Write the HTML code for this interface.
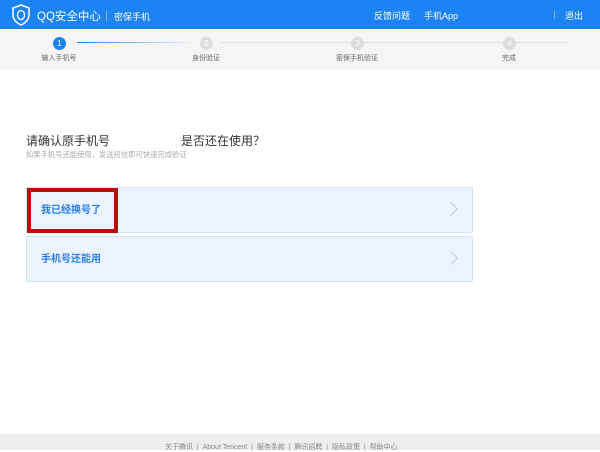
<!DOCTYPE html>
<html><head><meta charset="utf-8"><style>
*{margin:0;padding:0;box-sizing:border-box}
body{width:600px;height:450px;position:relative;background:#fff;font-family:"Liberation Sans","Noto Sans CJK SC",sans-serif;overflow:hidden}
.hd{position:absolute;left:0;top:0;width:600px;height:29px;background:#1b84f2;color:#fff}
.t{position:absolute;font-size:9px;white-space:nowrap}
.st{position:absolute;top:29px;left:0;width:600px;height:40px;background:#f5f5f5}
.c{position:absolute;width:13px;height:13px;border-radius:50%;background:#ddd;color:#fff;font-size:8px;text-align:center;line-height:13px;top:37px}
.lbl{position:absolute;top:53px;font-size:7px;color:#666;white-space:nowrap;transform:translateX(-50%)}
.box{position:absolute;left:26px;width:447px;background:#eaf3fe;border:1px solid #cfe2fa;border-radius:2px}
.box span{position:absolute;left:14px;font-size:10px;font-weight:bold;color:#2b7de9;line-height:12px}
.arr{position:absolute;right:16px;top:16px;width:10px;height:10px;border-top:1px solid #c5cdd8;border-right:1px solid #c5cdd8;transform:rotate(45deg)}
</style></head><body>
<div class="hd">
<svg style="position:absolute;left:12px;top:4px" width="18" height="22" viewBox="0 0 18 22"><path d="M9 1 L17 4 V11 C17 16 13 19 9 21 C5 19 1 16 1 11 V4 Z" fill="none" stroke="#fff" stroke-width="1.5"/><ellipse cx="9" cy="11" rx="3.5" ry="4.5" fill="none" stroke="#fff" stroke-width="1.3"/></svg>
<div class="t" style="left:37px;top:8px;font-size:11.5px">QQ安全中心</div>
<div style="position:absolute;left:106px;top:11px;width:1px;height:10px;background:#7fb6f5"></div>
<div class="t" style="left:114px;top:10px">密保手机</div>
<div class="t" style="left:374px;top:9px">反馈问题</div>
<div class="t" style="left:424px;top:9px">手机App</div>
<div style="position:absolute;left:554px;top:11px;width:1px;height:8px;background:#7fb6f5"></div>
<div class="t" style="left:565px;top:9px">退出</div>
</div>
<div class="st"></div>
<div style="position:absolute;left:77px;top:42px;width:113px;height:1px;background:linear-gradient(90deg,#1b84f2,#e8eef8)"></div>
<div style="position:absolute;left:220px;top:42px;width:350px;height:1px;background:#e3e3e3"></div>
<div class="c" style="left:53px;background:#1b84f2">1</div>
<div class="c" style="left:200px">2</div>
<div class="c" style="left:351px">3</div>
<div class="c" style="left:503px">4</div>
<div class="lbl" style="left:59px">输入手机号</div>
<div class="lbl" style="left:206px">身份验证</div>
<div class="lbl" style="left:357px">密保手机验证</div>
<div class="lbl" style="left:509px">完成</div>
<div class="t" style="left:26px;top:132px;font-size:12px;color:#333">请确认原手机号</div>
<div class="t" style="left:181px;top:132px;font-size:12px;color:#333">是否还在使用？</div>
<div class="t" style="left:26px;top:150px;font-size:7.3px;color:#aaa">如果手机号还能使用，发送短信即可快速完成验证</div>
<div class="box" style="top:187px;height:46px"><span style="top:17px">我已经换号了</span><i class="arr"></i></div>
<div class="box" style="top:236px;height:46px"><span style="top:17px">手机号还能用</span><i class="arr"></i></div>
<div style="position:absolute;left:27px;top:188px;width:91px;height:45px;border:4px solid #b5120c"></div>
<div style="position:absolute;left:0;top:434px;width:600px;height:16px;background:#eee"></div>
<div class="t" style="left:165px;top:442px;font-size:7px;color:#888">关于腾讯 &nbsp;| &nbsp;About Tencent &nbsp;| &nbsp;服务条款 &nbsp;| &nbsp;腾讯招聘 &nbsp;| &nbsp;隐私政策 &nbsp;| &nbsp;帮助中心</div>
</body></html>
